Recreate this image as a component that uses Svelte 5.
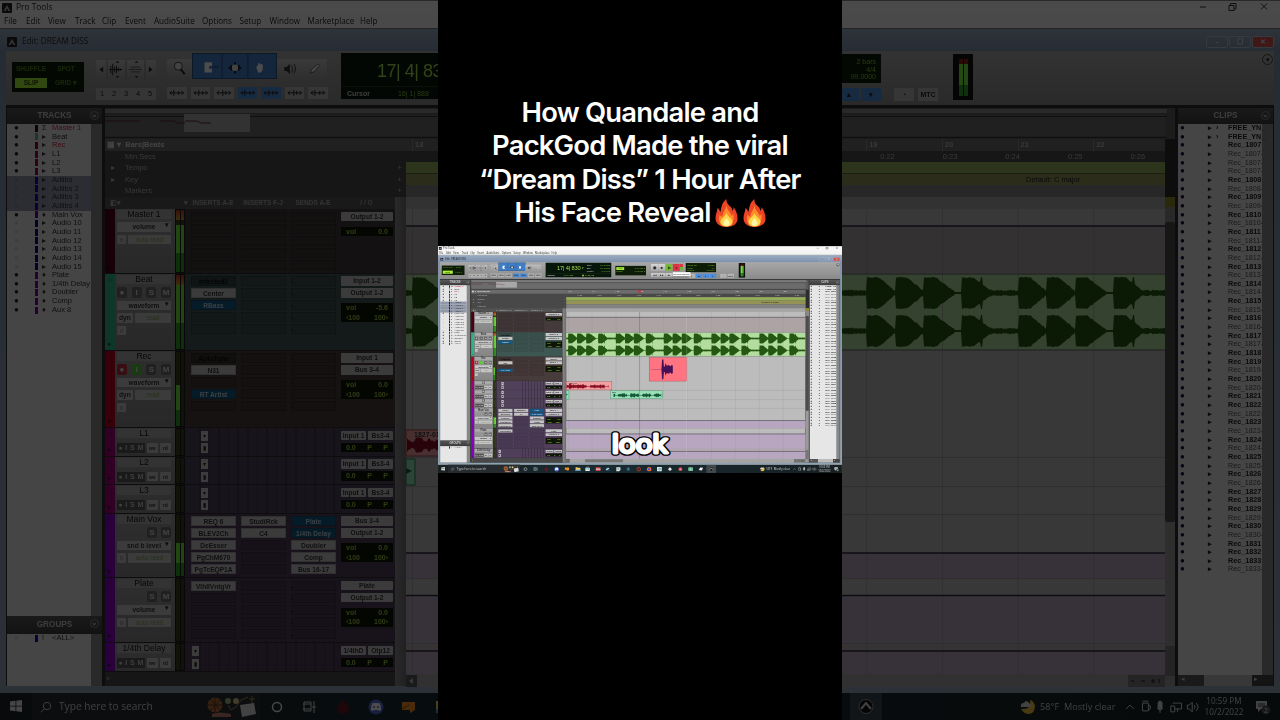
<script lang="ts">
	interface Track {
		name: string;
		height: number;
		color: string;
		tint: string;
		kind: 'master' | 'audio' | 'aux' | 'mini';
		level: number;
		mode?: string;
		armed?: boolean;
		inserts?: string[];
		inserts2?: string[];
		sends?: string[];
		io: string[];
		vol?: string;
		hot?: boolean;
	}

	const menu = ['File', 'Edit', 'View', 'Track', 'Clip', 'Event', 'AudioSuite', 'Options', 'Setup', 'Window', 'Marketplace', 'Help'];
	const menuWidths = [22, 22, 27, 27, 23, 29, 48, 37.5, 30, 38, 52.5, 24];

	const trackList = [
		['Master 1', '#300818', 'red'],
		['Beat', '#55b89a', ''],
		['Rec', '#900018', 'red'],
		['L1', '#a00050', ''],
		['L2', '#a00050', ''],
		['L3', '#a00050', ''],
		['Adlibs', '#2000b0', 'picked'],
		['Adlibs 2', '#2000b0', 'picked'],
		['Adlibs 3', '#2000b0', 'picked'],
		['Adlibs 4', '#2000b0', 'picked'],
		['Main Vox', '#6800a0', ''],
		['Audio 10', '#180080', 'hidden'],
		['Audio 11', '#180080', 'hidden'],
		['Audio 12', '#180080', 'hidden'],
		['Audio 13', '#180080', 'hidden'],
		['Audio 14', '#180080', 'hidden'],
		['Audio 15', '#180080', 'hidden'],
		['Plate', '#8000a0', ''],
		['1/4th Delay', '#8000a0', ''],
		['Doubler', '#8000a0', ''],
		['Comp', '#8000a0', ''],
		['Aux 8', '#8000a0', '']
	];

	// a trailing dash marks a sub-clip, drawn in regular weight
	const clips = (
		'FREE_YN_ FREE_YN_ 1807 1807- 1807- 1807- 1808 1808- 1809 1809- 1810 1810- 1811 1811- 1812 1812- 1813 1813- ' +
		'1814 1814- 1815 1815- 1816 1816- 1817 1817- 1818 1819 1819- 1820 1820- 1821 1822 1822- 1823 1823- ' +
		'1824 1824- 1825 1825- 1826 1826- 1827 1828 1829 1829- 1830 1830- 1831 1832 1833 1833-'
	)
		.split(' ')
		.map((c) => ({ name: c.startsWith('FREE') ? c : 'Rec_' + c, sub: c.endsWith('-'), multi: c.startsWith('FREE') }));

	// inserts: * is an open plug-in window, ~ is inactive
	const tracks: Track[] = [
		{ name: 'Master 1', height: 64.5, color: '#4c0014', tint: '#443a3b', kind: 'master', level: 0.76, mode: 'volume', io: ['Output 1-2'], vol: '0.0', hot: true },
		{ name: 'Beat', height: 77, color: '#2db38a', tint: '#3f5753', kind: 'audio', level: 0.86, mode: 'waveform', inserts: ['~Infected2', 'Center', '*RBass'], io: ['Input 1-2', 'Output 1-2'], vol: '-5.6', hot: true },
		{ name: 'Rec', height: 77.5, color: '#bd0020', tint: '#483b3b', kind: 'audio', level: 0.55, mode: 'waveform', armed: true, inserts: ['~AutoTune', 'N31', '', '*RT Artist'], io: ['Input 1', 'Bus 3-4'], vol: '0.0' },
		{ name: 'L1', height: 28.6, color: '#a8007c', tint: '#51415a', kind: 'mini', level: 0, io: ['Input 1', 'Bs3-4'] },
		{ name: 'L2', height: 28.7, color: '#a8007c', tint: '#51415a', kind: 'mini', level: 0, io: ['Input 1', 'Bs3-4'] },
		{ name: 'L3', height: 28.7, color: '#a8007c', tint: '#51415a', kind: 'mini', level: 0, io: ['Input 1', 'Bs3-4'] },
		{ name: 'Main Vox', height: 64.5, color: '#8a00c4', tint: '#503e5a', kind: 'aux', level: 0.54, mode: 'snd b level', inserts: ['REQ 6', 'BLEV2Ch', 'DeEsser', 'PgChM670', 'PgTcEQP1A'], inserts2: ['StudiRck', 'C4'], sends: ['*Plate', '*1/4th Delay', 'Doubler', 'Comp', 'Bus 16-17'], io: ['Bus 3-4', 'Output 1-2'], vol: '0.0' },
		{ name: 'Plate', height: 65, color: '#8a00c4', tint: '#503e5a', kind: 'aux', level: 0, mode: 'volume', inserts: ['VlhllVntgVr'], io: ['Plate', 'Output 1-2'], vol: '0.0' },
		{ name: '1/4th Delay', height: 29, color: '#8a00c4', tint: '#503e5a', kind: 'mini', level: 0, io: ['1/4thD', 'Otp12'] }
	];

	const bars = [13, 14, 15, 16, 17, 18, 19, 20, 21, 22];
	const seconds = [15, 16, 17, 18, 19, 20, 21, 22, 23, 24, 25, 26];
	const BAR = 75.7;
	const OFFSET = 6.5;

	function noise(n: number) {
		const s = Math.sin(n * 12.9898) * 43758.5453;
		return s - Math.floor(s);
	}

	// loudness of the beat at a given distance into its two-bar loop
	function beatAmp(p: number) {
		const hits = [0, 28.4, 57, 95];
		let i = 3;
		while (hits[i] > p) i--;
		const t = p - hits[i];
		if (i === 3 && t > 19 && t < 21) return 16;
		const body = t < 12 ? 16.2 : 16.2 - (t - 12) * (i < 2 ? 0.82 : 0.76);
		const floor = i === 3 ? 1.8 + noise(p) * 1.6 : 1;
		return Math.max(floor, body - noise(p * 3) * 1.2);
	}

	function wave(x0: number, x1: number, cy: number, amp: (x: number) => number, step = 1) {
		let top = '';
		let bottom = '';
		for (let x = x0; x <= x1; x += step) {
			const a = amp(x);
			top += `L${x} ${(cy - a).toFixed(1)}`;
			bottom = `L${x} ${(cy + a).toFixed(1)}` + bottom;
		}
		return 'M' + top.slice(1) + bottom + 'Z';
	}

	const loop = (x: number) => beatAmp((((x - OFFSET) % 151.4) + 151.4) % 151.4);
	const beatTop = wave(0, 759, 84, loop);
	const beatBottom = wave(0, 759, 122, loop);
	const vox1 = wave(1, 135, 236, (x) => (Math.sin(x / 9) > 0.8 && x > 30 ? 1 : 2.5 + noise(x) * 5), 1.5);
	const vox2 = wave(150, 302, 264, (x) => (Math.sin(x / 6) > 0.7 ? 1 : 2 + noise(x) * 5), 1.5);
	const take = wave(270, 338, 182, (x) => {
		if (x < 304) return 0.7;
		if (x < 310) return 31;
		if (x < 314) return 8;
		return Math.max(4, 21 - (x - 314) * 0.2 - noise(x) * 9);
	}, 2);

	const titleLines = ['How Quandale and', 'PackGod Made the viral', '“Dream Diss” 1 Hour After', 'His Face Reveal'];
</script>

{#snippet slots(items: string[], sends: boolean)}
	<div class="slots">
		{#each [0, 1, 2, 3, 4] as i}
			{@const item = items[i]}
			<div class="slot" class:filled={item} class:blue={item?.startsWith('*')} class:inactive={item?.startsWith('~')}>
				{#if sends && !item}<i>▪</i>{/if}
				{#if item}{item.replace(/[*~]/, '')}{/if}
			</div>
		{/each}
	</div>
{/snippet}

{#snippet strip(t: Track)}
	<div class="strip" style="height: {t.height}px; background: {t.tint}">
		<div class="tag" style="background: {t.color}"><span>○</span><span>▸</span></div>
		<div class="info {t.kind}">
			<div class="name">{t.name}</div>
			{#if t.kind === 'mini'}
				<div class="minirow">
					<div class="dots"><b>●</b><b>I</b><b>S</b><b>M</b></div>
					<div class="btn">wv</div>
					<div class="btn dim">rd</div>
				</div>
			{:else}
				{#if t.kind === 'audio'}
					<div class="rism">
						<b class:rec={t.armed}>●</b><b class:input={t.armed}>I</b><b>S</b><b>M</b>
					</div>
				{:else if t.kind === 'aux'}
					<div class="rism right"><b>S</b><b>M</b></div>
				{/if}
				<div class="btn wide">{t.mode}<i>▾</i></div>
				{#if t.kind === 'audio'}
					<div class="pair"><div class="btn">dyn</div><div class="btn grow green">read</div></div>
					<div class="btn tiny">○</div>
				{:else}
					<div class="pair"><div class="btn tiny">○</div><div class="btn grow green">auto read</div></div>
				{/if}
			{/if}
		</div>
		<div class="meter">
			{#each [0, 1] as side}
				<div class="well">
					{#if t.hot}<div class="clip-light"></div>{/if}
					{#if t.level && !(t.armed && side)}
						<div class="level" style="height: {t.level * 100}%"></div>
					{/if}
				</div>
			{/each}
		</div>
		<div class="plugs">
			{#if t.kind === 'mini'}
				<div class="cells" class:left={t.name.length > 3}><span>▾</span><span>▮</span></div>
			{:else}
				{@render slots(t.inserts ?? [], false)}
				{@render slots(t.inserts2 ?? [], false)}
				{@render slots(t.sends ?? [], t.kind !== 'master')}
			{/if}
		</div>
		<div class="io">
			{#if t.kind === 'mini'}
				<div class="pair"><div class="btn grow">{t.io[0]}</div><div class="btn grow">{t.io[1]}</div></div>
				<div class="lcd"><p><span>0.0</span><span>P</span><span>P</span></p></div>
			{:else}
				{#each t.io as label}<div class="btn wide">{label}</div>{/each}
				<div class="lcd gap">
					<p><span>vol</span><span>{t.vol}</span></p>
					{#if t.kind !== 'master'}<p><span>‹100</span><span>100›</span></p>{/if}
				</div>
			{/if}
		</div>
	</div>
{/snippet}

{#snippet appIcon()}
	<svg class="app" viewBox="0 0 10 10"><rect width="10" height="10" rx="1" fill="#222" /><path d="M1.5 8 5 2l3.500 6H6.500L5 5.500 3.500 8Z" fill="#aaa" /></svg>
{/snippet}

{#snippet desktop()}
	<div class="desktop">
		<header class="titlebar">
			{@render appIcon()}
			<span>Pro Tools</span>
			<svg class="wm" viewBox="0 0 72 10" stroke="#333" fill="none"><path d="M1 5h6M30 3.500h5v5h-5zM31.500 3V1.500H37V7h-1.500M62 1.500l6 6M68 1.500l-6 6" /></svg>
		</header>
		<nav>
			{#each menu as item, i}<span style="width: {menuWidths[i]}px">{item}</span>{/each}
		</nav>
		<div class="window">
			<div class="caption">
				{@render appIcon()}
				<span>Edit: DREAM DISS</span>
				<div class="wbtns"><b>–</b><b>❐</b><b class="close">✕</b></div>
			</div>
			<div class="toolbar">
				<div class="modes"><span>SHUFFLE</span><span>SPOT</span><span class="slip">SLIP</span><span class="grid">GRID ▾</span></div>
				<div class="zooms">
					<svg viewBox="0 0 60 20">
						<g fill="#222"><path d="M2 10l4-3v6ZM58 10l-4-3v6ZM19 3l2-2 2 2ZM19 17l2 2 2-2ZM39 3l2-2 2 2ZM39 17l2 2 2-2Z" /></g>
						<path d="M10 0v20M30 0v20M50 0v20" stroke="#777" />
						<path d="M12 10h14M14 6v8M16 4v12M18 7v6M20 6v8M22 8v4M24 9v2" stroke="#222" />
						<path d="M33 10h14M35 7.500h10M35 12.500h10" stroke="#555" />
					</svg>
					<div class="nums">{#each [1, 2, 3, 4, 5] as n}<b>{n}</b>{/each}</div>
				</div>
				<div class="tools">
					<div class="big">
						<svg viewBox="0 0 25 25"><circle cx="11" cy="9" r="5" fill="#ddd" stroke="#222" /><path d="M14 13l5 6" stroke="#222" stroke-width="2.500" /></svg>
						<div class="smart">
							<svg viewBox="0 0 84 26"><path d="M28 0v26M56 0v26" stroke="#2a4a78" /><path d="M9 9h8v4h-3v3h3v4H9Z" fill="#fff" /><path d="M19 14h5" stroke="#112" stroke-dasharray="2 1" /><path d="M35 15h14M38 12v6M42 9v12M46 12v6" stroke="#112" stroke-width="2" /><circle cx="42" cy="15" r="3.500" fill="#ddd" /><path d="M65 14l2-2v-2h2v1h3v6l-2 3h-3Z" fill="#fff" /></svg>
						</div>
						<svg viewBox="0 0 25 25"><path d="M6 10h3l4-4v13l-4-4H6Z" fill="#333" /><path d="M15 8q3 4 0 9M18 6q4 6 0 12" stroke="#222" fill="none" /></svg>
						<svg viewBox="0 0 25 25"><path d="M7 18l2-5 8-7 2 2-7 8Z" fill="#eee" stroke="#444" /></svg>
					</div>
					<div class="small">
						{#each [0, 1, 2, 3, 4, 5, 6] as i}
							<div class:on={i === 3 || i === 4}><svg viewBox="0 0 20 12"><path d="M3 6h14M5 4 3 6l2 2M15 4l2 2-2 2M{7 + (i % 3)} 3v6M12 4v4" fill="none" stroke="#222" /></svg></div>
						{/each}
					</div>
				</div>
				<div class="counter">
					<div class="main"><span class="pos">17| 4| 830</span><i class="caret">▾</i><div class="range"><p>Start<span>17| 3| 205</span></p><p>End<span>17| 3| 205</span></p><p>Length<span>0| 0| 000</span></p></div></div>
					<div class="cursor"><b>Cursor</b><span>16| 1| 888</span><span class="hi">▮▮.0: 16, 62</span></div>
				</div>
				<div class="gridbox"><p><em>Grid</em><span>0| 1| 000 ▾</span></p><p>Nudge<span>0:01.000 ▾</span></p></div>
				<div class="transport">
					<div class="row"><b>◉</b><b>■</b><b class="play">▶</b><b class="record">●</b><i></i></div>
					<div class="row low"><b>◂◂</b><b>▸▸</b><b>▸|</b></div>
					<div class="tip">Record Enable</div>
				</div>
				<div class="tempo">
					<div class="box"><p>Count Off<span>2 bars</span></p><p>Meter<span>4/4</span></p><p>Tempo ♩<span>99.0000</span></p></div>
					<div class="keys"><b>⏸</b><b class="on">▴▴</b><b class="on">▴</b><b class="on">▾</b></div>
				</div>
				<div class="aux-btns"><b>◔</b><b>MTC</b></div>
				<div class="vu"><i></i><i></i></div>
				<div class="round">▾</div>
			</div>
			<div class="body">
				<aside class="side">
					<h4>TRACKS<i>⌄</i></h4>
					<div class="list">
						{#each trackList as [name, color, flag], i}
							<div class="item {flag}"><i class="dot" class:off={flag === 'picked' || flag === 'hidden'}>●</i><i class="sw" style="background: {color}"></i><i>{i > 16 || i === 10 ? '♦' : i ? '▸' : 'Σ'}</i><span>{name}</span></div>
						{/each}
					</div>
					<h4 class="g">GROUPS<i>⌄</i></h4>
					<div class="list groups"><div class="item"><i class="dot off">●</i><i class="sw" style="background: #2000b0"></i><i>!</i><span>&lt;ALL&gt;</span></div></div>
				</aside>
				<main>
					<svg class="overview" viewBox="0 0 1070 31">
						<rect width="1070" height="31" fill="#5c5c5c" /><rect width="1062" height="4" y="1" fill="#8a8a8a" />
						<rect y="7" width="1060" height="21" fill="#6c6c6c" />
						<path d="M0 8.500h1062M0 29.500h1062" stroke="#333" />
						<rect x="79" y="6" width="66" height="18" fill="#a8a8a8" />
						<path d="M0 13h35M55 13h14l4 2h7M80 13h12l4 2h10" stroke="#5b2030" fill="none" />
					</svg>
					<div class="rulers">
						<div class="labels"><b>▦ ▾&nbsp; Bars|Beats</b><span>Min:Secs</span><span><i>▸</i>Tempo<em>+</em></span><span><i>▸</i>Key<em>+</em></span><span>Markers<em>+</em></span></div>
						<div class="scale">
							<div class="bars">{#each bars as n}<span>{n}</span>{/each}<i class="marker"></i></div>
							<div class="secs">{#each seconds as n}<span>0:{n}</span>{/each}</div>
							<div class="tempo-lane"></div>
							<div class="key-lane"><span>Default: C major</span></div>
							<div class="marker-lane"></div>
						</div>
					</div>
					<div class="edit">
						<div class="strips">
							<div class="heads"><span class="pick">◧▾</span><span class="v">▾</span><span>INSERTS A-E</span><span>INSERTS F-J</span><span>SENDS A-E</span><span>I / O</span></div>
							{#each tracks as t}{@render strip(t)}{/each}
							<div class="foot">▹</div>
						</div>
						<div class="divider"></div>
						<svg class="lanes" viewBox="0 -12 759 490">
							<rect y="-12" width="759" height="490" fill="#bcbcbc" />
							<rect y="-12" width="759" height="12" fill="#a6a6a6" />
							<rect y="17" width="759" height="47" fill="#ada3a5" />
							<rect y="344" width="759" height="25" fill="#b8a6c0" />
							<rect y="386" width="759" height="48" fill="#b8a6c0" />
							<rect y="434" width="759" height="8" fill="#b4aab2" />
							<rect y="442" width="759" height="23" fill="#b8a6c0" />
							<rect y="465" width="759" height="13" fill="#a4a4a4" />
							<rect y="66" width="759" height="74" fill="#b3dc9f" />
							{#each bars as _, i}<path d="M{OFFSET + i * BAR} 0V465" stroke="#8d8d8d" stroke-width=".8" opacity=".75" />{/each}
							<path d="M0 248.500H759M0 277.500H759M0 305.500H759M0 369.500H759M0 434.500H759" stroke="#999" />
							<path d="M0 65H759M0 141H759" stroke="#565" />
							<path d="M0 17H759M0 344H759M0 386.500H759M0 442H759" stroke="#2c2838" stroke-width="1.500" />
							<path d={beatTop} fill="#245711" /><path d={beatBottom} fill="#245711" />
							<rect x="263" y="144" width="119" height="75" fill="#ff7480" stroke="#983849" /><path d={take} fill="#451058" />
							<rect y="221" width="145" height="26" fill="#f0a0a0" stroke="#a04048" /><path d={vox1} fill="#850c20" /><text x="8" y="228">1827-01</text>
							<rect y="250" width="9" height="26" fill="#91e0b8" stroke="#287a55" /><path d="M0 259l6 3-6 3Z" fill="#145a38" />
							<rect x="141" y="250" width="165" height="25" fill="#9adfb8" stroke="#287a55" /><path d={vox2} fill="#145a38" /><text x="145" y="257">Rec</text>
							<path d="M382 0V465" stroke="#eee" opacity=".6" /><path d="M232.500 0V465" stroke="#444" opacity=".8" />
							<path d="M60 471.500h120" stroke="#777" stroke-width="10" />
							<rect y="466" width="11" height="12" fill="#555" /><path d="M7 469v6l-4-3Z" fill="#bbb" />
							<rect x="722" y="466" width="37" height="12" fill="#777" /><path d="M725 472h3M735 472h4M745 472h4M747 470v4M753 470v4" stroke="#222" />
						</svg>
						<div class="vscroll"><i></i><b></b><i></i></div>
					</div>
				</main>
				<aside class="side clips">
					<h4>CLIPS<i>⌄</i></h4>
					<div class="list">
						{#each clips as c}<div class="item" class:sub={c.sub}><i class="dot">●</i><i>▸{#if c.multi}&nbsp;&nbsp;›{/if}</i><span>{c.name}</span></div>{/each}
					</div>
					<div class="hscroll"><i>◂</i><i>▸</i></div>
				</aside>
			</div>
		</div>
		<footer>
			<div class="start"><svg viewBox="0 0 12 12"><path d="M0 1.500 5.500.8v4.900H0ZM6.300.7 12 0v5.700H6.300ZM0 6.400h5.500v4.900L0 10.500ZM6.300 6.400H12V12l-5.700-.8Z" fill="#e8e8e8" /></svg></div>
			<div class="search">
				<svg viewBox="0 0 12 12" fill="none" stroke="#ccc"><circle cx="7" cy="5" r="3.700" /><path d="M4.300 7.700.8 11.300" /></svg>
				<span>Type here to search</span>
				<svg class="art" viewBox="0 0 50 22"><circle cx="8" cy="9" r="7.500" fill="#b26b3c" /><path d="M8 1v16M0 9h16M3 3l11 12M14 3 3 15" stroke="#553322" /><path d="M5 18q6-3 19 0v3H5Z" fill="#bd7c70" /><circle cx="21" cy="5" r="3" fill="#a7b77b" /><circle cx="29" cy="5" r="3" fill="#d5c48b" /><path d="M21 9l3 5 5-3 5-7 7-3M45 0v7M42 3h6" stroke="#a68b59" fill="none" /><path d="M33 9l14-2 2 11-14 3Z" fill="#ddd" /></svg>
			</div>
			<svg class="icons" viewBox="260 0 622 27">
				<circle cx="277" cy="14" r="4.500" fill="none" stroke="#eee" stroke-width="1.500" />
				<path d="M304 9h7v9h-7zM303 11h8M303 16h8M314 8v12M312 14h4" fill="none" stroke="#ddd" />
				<path d="M343 7q6 5 6 9t-6 5q-6-1-6-5t6-9Z" fill="#651526" />
				<circle cx="376" cy="14" r="7.500" fill="#5266d0" /><path d="M371 17q0-6 2-7h6q2 1 2 7l-2 1-1-1h-4l-1 1Z" fill="#fff" /><path d="M374 13v2M378 13v2" stroke="#5266d0" stroke-width="1.500" />
				<path d="M402 9h13v8l-5 3v-3h-8Z" fill="#f29025" /><path d="M402 16l7-4" stroke="#8b4210" />
				<path d="M436 8h5l2 2h8v10h-15Z" fill="#f3cf62" /><path d="M436 16h15v4h-15Z" fill="#5c9cc9" />
				<path d="M467 10h14v10h-14z" fill="#eee" /><path d="M471 10V7h6v3" fill="none" stroke="#eee" /><path d="M470 12h4v3h-4z" fill="#35a852" /><path d="M475 12h4v3h-4z" fill="#2d86c9" />
				<path d="M500 8h15v12h-15z" fill="#cc4145" /><path d="M500 14h15" stroke="#eee" stroke-width="3" />
				<circle cx="538" cy="14" r="7" fill="#244662" /><path d="M533 16l8-5" stroke="#eee" stroke-width="4" />
				<path d="M565 8h13v9l-4 4h-9Z" fill="#dce6e6" /><path d="M568 12h7M568 15h6" stroke="#345" />
				<circle cx="603" cy="14" r="6" fill="#26526c" /><path d="M603 9v7" stroke="#fff" />
				<circle cx="636" cy="14" r="6" fill="#5c2020" stroke="#b44" stroke-width="2" />
				<circle cx="669" cy="14" r="7" fill="#ff7926" /><circle cx="669" cy="14" r="4" fill="#6b4bd1" />
				<path d="M694 7h15v14h-15z" fill="#d6eef2" /><circle cx="702" cy="14" r="3" fill="none" stroke="#20566a" stroke-width="1.500" />
				<path d="M735 7l3 4 4 3-4 3-3 4-3-4-4-3 4-3Z" fill="#e6e6e6" />
				<circle cx="768" cy="14" r="6" fill="#e04452" /><path d="M765 14h6" stroke="#fff" stroke-width="2" />
				<path d="M793 8h15v12h-15z" fill="#61b48d" /><path d="M793 14h15M800 8v12" stroke="#e8f4ed" />
				<path d="M826 17l5-8 9 1-4 8Z" fill="#eee" />
				<rect x="850" y="0" width="32" height="27" fill="#3d474c" /><circle cx="866" cy="13.500" r="7" fill="#111" stroke="#999" /><path d="m861 16 5-6 5 6" fill="none" stroke="#ddd" stroke-width="2" />
			</svg>
			<div class="tray">
				<svg viewBox="0 0 16 16"><path d="M10 1q2 10-9 9 3 5 8 5 6-1 6-8-1-5-5-6Z" fill="#f0c33e" /><path d="M1 8q-1-4 3-4 2-4 5 0 3 1 1 4Z" fill="#ddd" /></svg>
				<span class="weather">58°F&nbsp; Mostly clear</span>
				<svg class="sys" viewBox="0 0 78 14" fill="none" stroke="#ddd"><path d="M1 9l4-4 4 4M18 3h6v8h-6zM18 1h6M24 5l2 1v3l-2 1M49 3h9v6h-7M47 6h4v6h-4zM54 9v3M64 5h2l3-3v10l-3-3h-2ZM71 5q2 2 0 4M73 3q4 4 0 8" /><path d="M36 1q2 0 2 2v4q0 2-2 2t-2-2V3q0-2 2-2ZM36 10v3M33 8q3 4 6 0" fill="#ddd" /></svg>
				<div class="clock"><span>10:59 PM</span><span>10/2/2022</span></div>
				<svg class="note" viewBox="0 0 16 16"><path d="M1 2h11v8H6l-3 3v-3H1Z" fill="#ddd" /><path d="M3 5h7M3 7h7" stroke="#445" /><circle cx="11" cy="11" r="4.500" fill="#4b5256" /><text x="9" y="14">2</text></svg>
			</div>
		</footer>
	</div>
{/snippet}

{#snippet flame()}
	<svg class="flame" viewBox="0 0 22 28">
		<path d="M11 0c-1 6 6 7 6 12 1-1 1-3 1-4 3 4 4 8 4 12 0 5-5 8-11 8S0 25 0 19c0-4 2-7 2-10 2 1 2 3 3 4 1-5 1-9 6-13Z" fill="#ee4426" />
		<path d="M11 6c0 5 5 8 5 11l2-2c1 8-2 12-7 12S2 23 4 16l3 2c0-5 3-6 4-12Z" fill="#ff8a2b" />
		<path d="M11 14c1 4 6 5 6 9 0 3-3 4.500-6 4.500S5 26 5 23c0-4 5-5 6-9Z" fill="#ffd84a" />
		<path d="M11 19c1 2 3 3 3 5s-1 3-3 3-3-1-3-3 2-3 3-5Z" fill="#fff6a8" />
	</svg>
{/snippet}

<div class="stage">
	<div class="backdrop">{@render desktop()}</div>
	<div class="phone">
		<h1>
			{#each titleLines as line, i}
				<span class="line">{line}{#if i === 3}{@render flame()}{@render flame()}{/if}</span>
			{/each}
		</h1>
		<div class="video">
			{@render desktop()}
			<svg class="word" viewBox="0 0 80 36"><text x="10" y="24" textLength="56" lengthAdjust="spacingAndGlyphs" class="outline">look</text><text x="10" y="24" textLength="56" lengthAdjust="spacingAndGlyphs" class="face">look</text></svg>
		</div>
	</div>
</div>

<style>
	:global(body) {
		background: #000;
	}

	.stage {
		width: 1280px;
		height: 720px;
		position: relative;
		overflow: hidden;
		display: flex;
		justify-content: center;
	}

	.backdrop {
		position: absolute;
		inset: 0;
		filter: brightness(0.3) blur(0.4px);
	}

	.phone {
		position: relative;
		width: 404px;
		height: 720px;
		background: #000;
	}

	h1 {
		margin: 0;
		padding-top: 96px;
		height: 150px;
		font: 600 27.4px/33.3px Inter, sans-serif;
		letter-spacing: -0.8px;
		color: #fff;
		text-align: center;
	}

	.line {
		display: flex;
		justify-content: center;
		align-items: center;
		white-space: nowrap;
	}

	.flame {
		width: 23px;
		height: 28px;
		margin-left: 5px;
	}

	.flame:first-of-type {
		margin-left: 4px;
	}

	.video {
		position: relative;
		width: 404px;
		height: 227px;
		overflow: hidden;
	}

	.video .desktop {
		transform: scale(0.3156);
		transform-origin: 0 0;
	}

	.word {
		position: absolute;
		left: 164px;
		top: 183px;
		width: 80px;
		height: 36px;
		overflow: visible;
	}

	.word text {
		font: 400 25px Inter, sans-serif;
		stroke-linejoin: round;
		stroke-linecap: round;
	}

	.word .outline {
		fill: #000;
		stroke: #000;
		stroke-width: 5.500px;
	}

	.word .face {
		fill: #fff;
		stroke: #fff;
		stroke-width: 2.800px;
	}

	.desktop {
		width: 1280px;
		height: 720px;
		display: flex;
		flex-direction: column;
		background: #fff;
		font: 7px/1 'Liberation Sans', Arial, sans-serif;
		color: #222;
	}

	.desktop i,
	.desktop em {
		font-style: normal;
	}

	.desktop p {
		margin: 0;
	}

	.titlebar {
		height: 14px;
		box-sizing: border-box;
		border-top: 1px solid #888;
		display: flex;
		align-items: center;
		gap: 4px;
		padding-left: 2px;
		background: #f6f6f6;
		font: 8.400px/1 'Open Sans', sans-serif;
	}

	.app {
		width: 10px;
		height: 10px;
	}

	.wm {
		width: 72px;
		height: 10px;
		margin: 0 9px 2px auto;
	}

	nav {
		height: 14px;
		display: flex;
		align-items: center;
		padding: 1px 0 0 4px;
		box-sizing: border-box;
		background: #f4f4f4;
		font: 8.100px/1 'Open Sans', sans-serif;
	}

	.window {
		height: 665px;
		display: flex;
		flex-direction: column;
		padding: 0 6px 7px 6px;
		box-sizing: border-box;
		background: linear-gradient(#9aabc2, #7f93ad 22px, #8fa3b3);
		border-top: 1px solid #777;
	}

	.caption {
		height: 22px;
		display: flex;
		align-items: center;
		gap: 5px;
		padding: 3px 0 0 1px;
		box-sizing: border-box;
		font: 8.200px/1 'Open Sans', sans-serif;
	}

	.wbtns {
		display: flex;
		gap: 1px;
		margin-left: auto;
	}

	.wbtns b {
		width: 20px;
		height: 10px;
		border: 1px solid #b3bece;
		border-radius: 2px;
		text-align: center;
		line-height: 10px;
		color: #dde;
		font-size: 7px;
	}

	.wbtns .close {
		background: #d3504b;
	}

	.toolbar {
		height: 54px;
		display: flex;
		align-items: flex-start;
		background: linear-gradient(#a8a8a8, #8a8a8a);
		border-bottom: 3px solid #2c2c2c;
		flex: none;
	}

	.modes {
		width: 66px;
		height: 26px;
		margin: 11px 0 0 6px;
		padding: 2px 3px;
		display: grid;
		grid-template-columns: 32px 1fr;
		gap: 1px 4px;
		align-items: center;
		text-align: center;
		background: #0d1c06;
		color: #518020;
		font-weight: 700;
		font-size: 6.500px;
	}

	.modes .slip {
		background: #a8f038;
		color: #254008;
		line-height: 10px;
	}

	.zooms {
		width: 60px;
		margin: 9px 0 0 12px;
	}

	.zooms svg {
		display: block;
		width: 60px;
		height: 19px;
		background: linear-gradient(#c0c0c0, #999);
	}

	.nums {
		display: flex;
		justify-content: space-around;
		margin-top: 9px;
		line-height: 12px;
		background: #b0b0b0;
		font-size: 7.500px;
	}

	.nums b {
		font-weight: 400;
	}

	.tools {
		margin: 2px 0 0 11px;
		width: 161px;
	}

	.big {
		display: flex;
		align-items: center;
	}

	.big > svg {
		width: 25px;
		height: 20px;
		background: linear-gradient(#c0c0c0, #999);
		margin-top: 6px;
	}

	.smart {
		width: 85px;
		height: 26px;
		background: #3f7ec6;
		border: 1px solid #27517f;
		box-sizing: border-box;
	}

	.smart svg {
		width: 84px;
		height: 24px;
	}

	.small {
		display: flex;
		gap: 4px;
		margin-top: 8px;
	}

	.small div {
		width: 20px;
		height: 12px;
		background: #b3b3b3;
	}

	.small svg {
		display: block;
	}

	.small .on,
	.keys .on {
		background: #4a8edc;
	}

	.counter {
		width: 208px;
		height: 46px;
		margin: 2px 0 0 13px;
		background: #07160a;
		color: #a5d84c;
	}

	.main {
		height: 33px;
		display: flex;
		align-items: center;
		padding-left: 36px;
		border-bottom: 1px solid #28351e;
	}

	.pos {
		font-size: 18px;
		letter-spacing: -0.5px;
		white-space: nowrap;
		width: 80px;
		padding-top: 3px;
	}

	.caret {
		width: 14px;
		font-size: 8px;
	}

	.range {
		flex: 1;
		padding-right: 4px;
	}

	.range p,
	.gridbox p,
	.tempo p {
		display: flex;
		justify-content: space-between;
		line-height: 9px;
		white-space: nowrap;
	}

	.range p {
		color: #ccc;
	}

	.range span {
		color: #83b53a;
	}

	.cursor {
		display: flex;
		align-items: center;
		height: 12px;
		padding-left: 6px;
		gap: 28px;
	}

	.cursor b {
		color: #ccc;
	}

	.cursor span {
		color: #83b53a;
	}

	.cursor .hi {
		color: #b5e04a;
	}

	.gridbox {
		width: 91px;
		height: 26px;
		margin: 12px 0 0 13px;
		padding: 4px 3px 0;
		box-sizing: content-box;
		background: #0d1c06;
		color: #83b53a;
	}

	.gridbox em {
		background: #a8f038;
		color: #142;
		padding: 0 6px;
	}

	.transport {
		position: relative;
		width: 107px;
		margin: 6px 0 0 16px;
	}

	.row {
		display: flex;
		gap: 1px;
	}

	.row b {
		width: 22px;
		height: 22px;
		background: linear-gradient(#d8d8d8, #aaa);
		text-align: center;
		font-size: 12px;
		line-height: 22px;
	}

	.row .play {
		background: #75b83c;
		color: #2b5c10;
	}

	.row .record {
		background: #dc3442;
		color: #701018;
	}

	.row i {
		width: 9px;
		height: 20px;
		background: linear-gradient(#dd3344 50%, #64b637 50%);
	}

	.low {
		margin-top: 7px;
	}

	.low b {
		height: 12px;
		line-height: 12px;
		font-size: 8px;
	}

	.tip {
		position: absolute;
		left: 69px;
		top: 26px;
		width: 56px;
		background: #fff;
		line-height: 12px;
		text-align: center;
		font-size: 8px;
		z-index: 1;
	}

	.tempo {
		width: 96px;
		margin: 3px 0 0 3px;
	}

	.box {
		height: 29px;
		padding: 4px 5px 0;
		box-sizing: border-box;
		background: #0d1c06;
		color: #83b53a;
	}

	.tempo .box p {
		line-height: 7.500px;
	}

	.keys,
	.aux-btns {
		display: flex;
		gap: 2px;
		margin-top: 5px;
	}

	.keys {
		justify-content: flex-end;
	}

	.keys b,
	.aux-btns b {
		width: 20px;
		height: 13px;
		background: #b3b3b3;
		line-height: 13px;
		text-align: center;
	}

	.aux-btns {
		margin: 37px 0 0 13px;
		gap: 4px;
	}

	.vu {
		width: 20px;
		height: 46px;
		margin: 3px 0 0 15px;
		padding: 5px 5px 4px 6px;
		box-sizing: border-box;
		display: flex;
		gap: 1px;
		background: #0c100c;
	}

	.vu i {
		flex: 1;
		background: linear-gradient(#8a2018 14%, #78f03c 14% 70%, #30a028 70%);
	}

	.round {
		width: 9px;
		height: 9px;
		margin: 3px 1px 0 auto;
		border: 1px solid #444;
		border-radius: 50%;
		line-height: 9px;
		text-align: center;
	}

	.body {
		flex: 1;
		min-height: 0;
		display: flex;
		gap: 3px;
		background: #2c2c2c;
		padding: 0 1px;
	}

	.side {
		width: 95px;
		display: flex;
		flex-direction: column;
		background: #888;
	}

	h4 {
		position: relative;
		margin: 0;
		height: 16px;
		flex: none;
		background: linear-gradient(#555, #3c3c3c);
		color: #c9c9c9;
		text-align: center;
		font-size: 8.200px;
		line-height: 16px;
	}

	h4 i {
		position: absolute;
		right: 3px;
		top: 3px;
		width: 7px;
		height: 7px;
		border: 1px solid #888;
		border-radius: 50%;
		line-height: 5px;
	}

	h4.g {
		height: 18px;
		line-height: 18px;
	}

	.list {
		flex: 1;
		width: 84px;
		background: #e6e6e6;
	}

	.list.groups {
		flex: none;
		height: 52px;
	}

	.item {
		display: grid;
		grid-template-columns: 21px 7px 10px 1fr;
		align-items: center;
		height: 8.670px;
		line-height: 8.670px;
		padding-left: 7px;
		font-size: 7.500px;
		white-space: nowrap;
		color: #333;
	}

	.item .dot {
		font-size: 8px;
		color: #222;
	}

	.item .off {
		opacity: 0.12;
	}

	.item .sw {
		width: 3px;
		height: 7px;
	}

	.item.red span {
		color: #d02440;
	}

	.item.picked {
		background: #9097a8;
	}

	.clips .item {
		grid-template-columns: 28px 20px 1fr;
		padding-left: 2px;
		font-size: 7.200px;
		font-weight: 700;
		color: #222;
	}

	.clips .item .dot {
		color: #204;
	}

	.clips .item.sub span {
		font-weight: 400;
		color: #555;
	}

	.hscroll {
		height: 11px;
		background: linear-gradient(90deg, #555 26px, #bbb 26px 74px, #444 74px);
		display: flex;
		justify-content: space-between;
		padding: 0 15px 0 3px;
		color: #ccc;
	}

	main {
		width: 1070px;
		display: flex;
		flex-direction: column;
	}

	.overview {
		width: 1070px;
		height: 31px;
		flex: none;
	}

	.rulers {
		height: 58px;
		display: flex;
		flex: none;
	}

	.labels {
		width: 301px;
		display: grid;
		grid-template-rows: 12px 11px 12px 11px 12px;
		background: #484848;
		color: #b5b5b5;
		font-size: 7.500px;
	}

	.labels > * {
		position: relative;
		padding-left: 20px;
		line-height: 12px;
	}

	.labels > b {
		padding-left: 2px;
		background: #6c6c6c;
		color: #ddd;
	}

	.labels i {
		position: absolute;
		left: 6px;
	}

	.labels em {
		position: absolute;
		right: 4px;
	}

	.scale {
		width: 759px;
		background: #555;
		overflow: hidden;
		font-size: 7.500px;
		color: #bbb;
	}

	.bars {
		position: relative;
		height: 12px;
		display: flex;
		padding-left: 6px;
		background: #6c6c6c;
		font-weight: 700;
	}

	.bars .marker {
		position: absolute;
		left: 228px;
		top: 0;
		width: 9px;
		height: 11px;
		background: #d03040;
		clip-path: polygon(0 0, 100% 0, 100% 60%, 50% 100%, 0 60%);
	}

	.bars span {
		width: 75.700px;
		flex: none;
		box-sizing: border-box;
		border-left: 1px solid #888;
		padding-left: 2px;
		line-height: 12px;
	}

	.secs {
		height: 11px;
		display: flex;
		padding-left: 36px;
		background: #484848;
		line-height: 11px;
	}

	.secs span {
		width: 62.600px;
		flex: none;
	}

	.tempo-lane {
		height: 11px;
		background: #96ac5c;
		border-bottom: 1px solid #59653c;
	}

	.key-lane {
		height: 11px;
		background: #949255;
		color: #222;
		padding-left: 620px;
		line-height: 11px;
	}

	.marker-lane {
		height: 13px;
		background: #828282;
	}

	.edit {
		flex: 1;
		display: flex;
		min-height: 0;
	}

	.strips {
		width: 290px;
		background: #484848;
	}

	.heads {
		height: 12px;
		display: grid;
		grid-template-columns: 20px 63px 50px 50px 50px 57px;
		background: #525252;
		color: #aaa;
		line-height: 12px;
		text-align: center;
		font-size: 6.500px;
		font-weight: 700;
	}

	.heads .v {
		text-align: right;
	}

	.strip {
		display: flex;
		box-sizing: border-box;
		border-bottom: 1px solid #2c2c2c;
	}

	.tag {
		width: 10px;
		display: flex;
		flex-direction: column;
		justify-content: space-between;
		align-items: center;
		padding: 2px 0 3px;
		box-sizing: border-box;
		color: #00000080;
	}

	.info {
		width: 60px;
		padding: 1px 4px 0 2px;
		box-sizing: border-box;
		background: linear-gradient(#9a9a9a, #858585);
		display: flex;
		flex-direction: column;
		gap: 3px;
	}

	.info.mini {
		gap: 5px;
	}

	.name {
		height: 9px;
		flex: none;
		background: #aaa;
		text-align: center;
		font-size: 8.500px;
		line-height: 9px;
		color: #111;
	}

	.btn {
		position: relative;
		height: 9.500px;
		min-width: 0;
		padding: 0 2px;
		background: #c6c6c6;
		border-radius: 1px;
		line-height: 10px;
		text-align: center;
		white-space: nowrap;
		color: #333;
		font-weight: 700;
		font-size: 6.600px;
	}

	.io .btn,
	.grow {
		padding: 0;
	}

	.btn.wide i {
		position: absolute;
		right: 2px;
		top: -2px;
	}

	.btn.tiny {
		width: 5px;
		flex: none;
	}

	.btn.green {
		color: #7c9955;
		font-weight: 400;
	}

	.grow {
		flex: 1;
	}

	.pair,
	.minirow {
		display: flex;
		gap: 2px;
	}

	.rism {
		display: flex;
		justify-content: space-between;
	}

	.rism.right {
		justify-content: flex-end;
		gap: 4px;
	}

	.rism b {
		width: 10px;
		height: 11px;
		background: #6c6c6c;
		border-radius: 2px;
		color: #ddd;
		text-align: center;
		line-height: 11px;
		font-size: 8px;
	}

	.rism b.rec {
		background: #c22b3c;
	}

	.rism b.input {
		background: #57c638;
	}

	.dots {
		width: 29px;
		display: flex;
		justify-content: space-around;
		background: #555;
		color: #ccc;
		line-height: 10px;
	}

	.minirow .btn {
		width: 7.500px;
		font-size: 5px;
	}

	.meter {
		width: 10px;
		padding: 1px;
		box-sizing: border-box;
		display: flex;
		gap: 1px;
		background: #191919;
	}

	.well {
		position: relative;
		flex: 1;
		display: flex;
		align-items: flex-end;
		background: #37401a;
	}

	.clip-light {
		position: absolute;
		top: 0;
		width: 100%;
		height: 10px;
		background: linear-gradient(#c03020, #c59a2c);
	}

	.level {
		width: 100%;
		background: linear-gradient(#70e838 60%, #2c9c20 60%);
	}

	.plugs {
		width: 150px;
		margin-left: 6px;
		display: flex;
		gap: 5px;
	}

	.slots {
		width: 45px;
		padding-top: 2.500px;
		display: flex;
		flex-direction: column;
		gap: 2px;
	}

	.slot {
		height: 10px;
		box-sizing: border-box;
		border: 1px solid #0000002e;
		background: #00000012;
		white-space: nowrap;
		line-height: 9px;
		font-size: 6.600px;
	}

	.slot i {
		font-size: 5px;
	}

	.slot.filled {
		background: #c4c4c4;
		text-align: center;
		font-weight: 700;
		color: #333;
	}

	.slot.filled.blue {
		background: #155a86;
		color: #bdd2e0;
	}

	.slot.filled.inactive {
		background: #00000030;
		color: #0b0b0b;
	}

	.cells {
		width: 100%;
		display: flex;
		flex-direction: column;
		justify-content: space-evenly;
		padding-left: 10px;
		background: repeating-linear-gradient(90deg, #0000 0 8px, #00000030 8px 9.600px);
	}

	.cells.left {
		padding-left: 1px;
	}

	.cells span {
		width: 7px;
		height: 10px;
		background: #c8c8c8;
		text-align: center;
		line-height: 10px;
		font-size: 6px;
	}

	.io {
		width: 52px;
		padding-top: 2.500px;
		display: flex;
		flex-direction: column;
		gap: 2.500px;
	}

	.lcd {
		background: #0d1506;
		color: #9ac044;
		font-weight: 700;
		font-size: 7px;
	}

	.lcd.gap {
		margin-top: 3px;
	}

	.lcd p {
		display: flex;
		justify-content: space-between;
		padding: 0 5px;
		line-height: 9.500px;
	}

	.foot {
		color: #b8bd70;
		line-height: 11px;
		padding-left: 2px;
	}

	.divider {
		width: 11px;
		background: linear-gradient(90deg, #8a8a8a, #6c6c6c);
	}

	.lanes {
		width: 759px;
		height: 490px;
		flex: none;
	}

	.lanes text {
		font-size: 7px;
		font-weight: 700;
		fill: #333;
	}

	.vscroll {
		width: 10px;
		display: flex;
		flex-direction: column;
		background: #9a9a9a;
	}

	.vscroll b {
		height: 300px;
		background: #4c4c4c;
		border-radius: 2px;
	}

	.vscroll i:first-child {
		height: 25px;
		background: linear-gradient(#8e8a28 10px, #888 10px);
	}

	.vscroll i:last-child {
		margin-top: 124px;
		height: 30px;
		background: #777;
	}

	footer {
		height: 27px;
		display: flex;
		align-items: center;
		background: linear-gradient(90deg, #1b2225, #172b31 40%, #172023);
		font-family: 'Open Sans', sans-serif;
		color: #d4d4d4;
	}

	.start {
		width: 32px;
		padding-left: 10px;
		box-sizing: border-box;
	}

	.start svg {
		width: 12px;
	}

	.search {
		width: 228px;
		height: 27px;
		display: flex;
		align-items: center;
		gap: 7px;
		padding-left: 8px;
		box-sizing: border-box;
		background: #252b2e;
		font-size: 10.200px;
		white-space: nowrap;
	}

	.search > svg {
		width: 12px;
		flex: none;
	}

	.search > .art {
		width: 50px;
		margin-left: auto;
		margin-right: 3px;
	}

	.icons {
		width: 622px;
		height: 27px;
	}

	.tray {
		margin-left: auto;
		width: 260px;
		display: flex;
		align-items: center;
	}

	.tray svg {
		width: 16px;
		height: 16px;
	}

	.weather {
		width: 85px;
		margin-left: 4px;
		font-size: 9.200px;
		white-space: nowrap;
	}

	.tray .sys {
		width: 76px;
		height: 14px;
	}

	.clock {
		width: 46px;
		display: flex;
		flex-direction: column;
		align-items: center;
		gap: 3px;
		font-size: 8.200px;
	}

	.tray .note {
		margin-left: 8px;
	}

	.note text {
		font-size: 7px;
		fill: #eee;
	}
</style>
